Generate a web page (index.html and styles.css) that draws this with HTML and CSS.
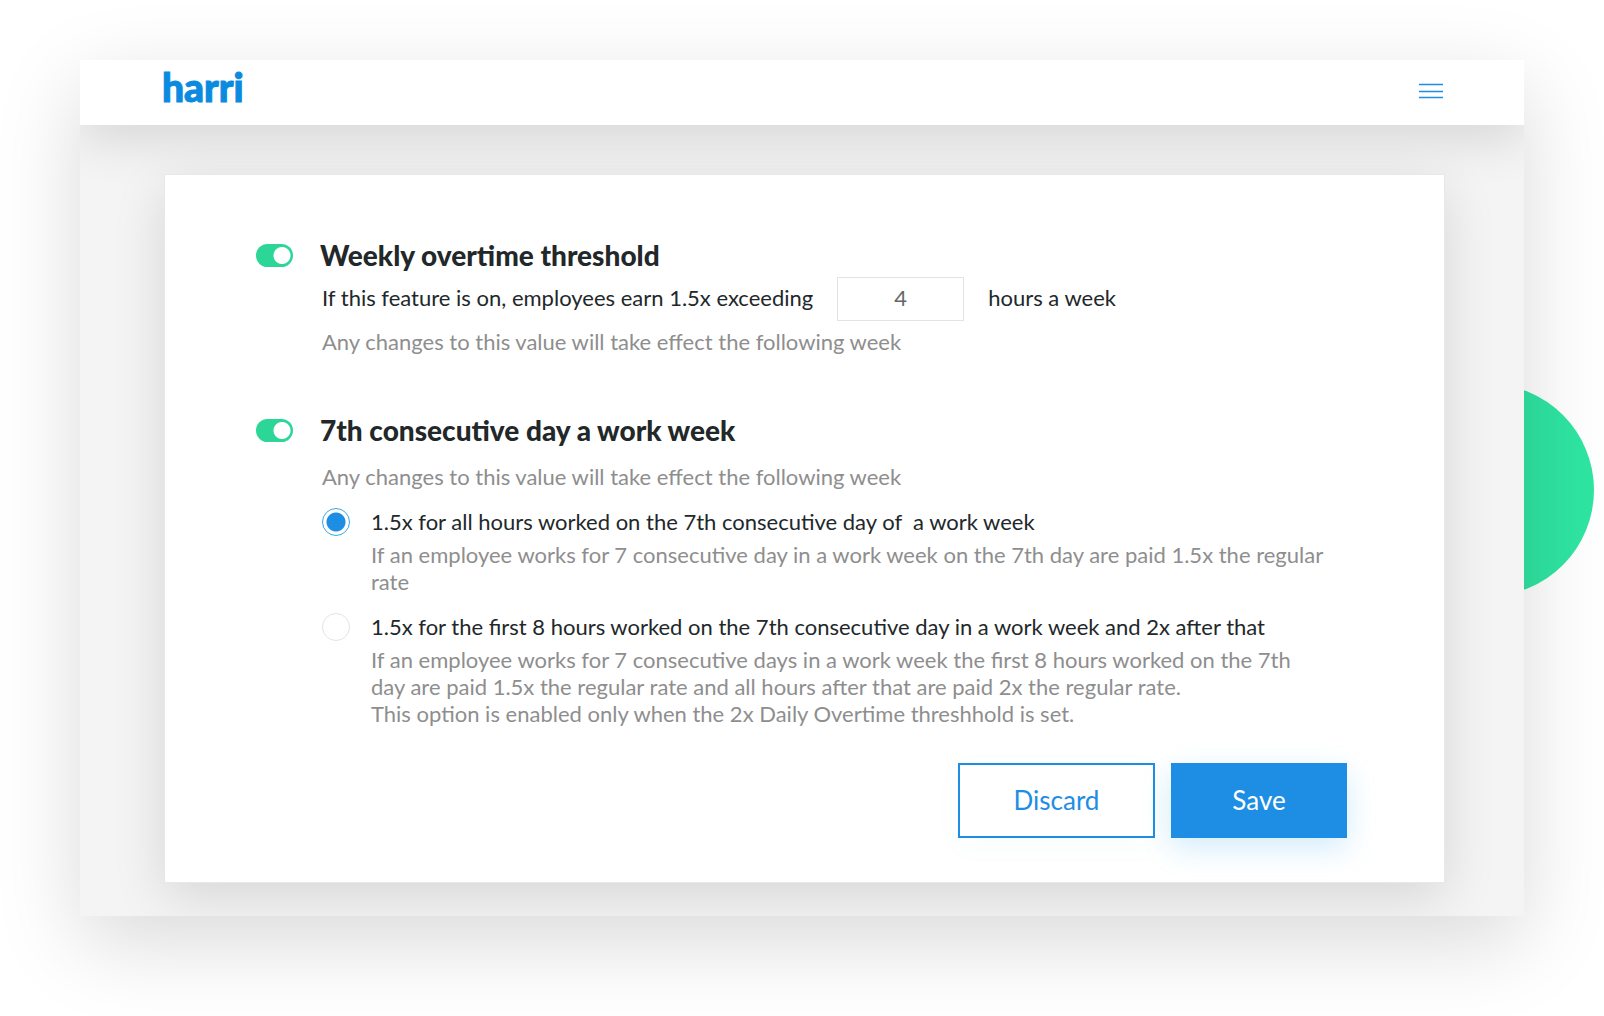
FILE: index.html
```
<!DOCTYPE html>
<html lang="en">

<head>
  <meta charset="utf-8">
  <title>Overtime settings</title>
  <link rel="stylesheet" href="styles.css">
</head>

<body>
  <div class="stage">
    <div class="circle"></div>

    <div class="window">
      <header class="topbar">
        <a class="logo" href="#">harri</a>
        <button class="menu" type="button" aria-label="Menu">
          <svg width="24" height="16" viewBox="0 0 24 16">
            <path d="M0 1.5h24M0 8.5h24M0 14.5h24" />
          </svg>
        </button>
      </header>

      <form class="card" action="#" method="post">
        <section class="setting">
          <input class="toggle" type="checkbox" id="weekly" checked>
          <div class="setting-body">
            <h2><label for="weekly">Weekly overtime threshold</label></h2>
            <div class="threshold">
              <label for="hours">If this feature is on, employees earn 1.5x exceeding</label>
              <input type="text" id="hours" name="hours" value="4">
              <span>hours a week</span>
            </div>
            <p class="note">Any changes to this value will take effect the following week</p>
          </div>
        </section>

        <section class="setting">
          <input class="toggle" type="checkbox" id="seventh" checked>
          <div class="setting-body">
            <h2><label for="seventh">7th consecutive day a work week</label></h2>
            <p class="note note-spaced">Any changes to this value will take effect the following week</p>

            <div class="option">
              <input type="radio" id="all-hours" name="rate" checked>
              <div>
                <label for="all-hours">1.5x for all hours worked on the 7th consecutive day of &nbsp;a work week</label>
                <p>If an employee works for 7 consecutive day in a work week on the 7th day are paid 1.5x the regular<br>
                  rate</p>
              </div>
            </div>

            <div class="option">
              <input type="radio" id="first-hours" name="rate">
              <div>
                <label for="first-hours">1.5x for the first 8 hours worked on the 7th consecutive day in a work week and 2x after that</label>
                <p>If an employee works for 7 consecutive days in a work week the first 8 hours worked on the 7th<br>
                  day are paid 1.5x the regular rate and all hours after that are paid 2x the regular rate.<br>
                  This option is enabled only when the 2x Daily Overtime threshhold is set.</p>
              </div>
            </div>
          </div>
        </section>

        <div class="actions">
          <button class="discard" type="button">Discard</button>
          <button class="save" type="submit">Save</button>
        </div>
      </form>
    </div>
  </div>
</body>

</html>
```
FILE: styles.css
```
* {
  box-sizing: border-box;
}

body {
  margin: 0;
  background: #fff;
  color: #22282a;
  font-family: Lato, "Liberation Sans", sans-serif;
  font-size: 22px;
  line-height: 27px;
}

h2,
p {
  margin: 0;
}

.stage {
  position: relative;
  padding: 60px 80px 100px;
}

/* green disc peeking out behind the window */
.circle {
  position: absolute;
  top: 384px;
  right: 10px;
  width: 212px;
  height: 212px;
  border-radius: 50%;
  background: #2fe5a2;
}

.window {
  position: relative;
  overflow: hidden;
  padding-bottom: 33px;
  background: #f4f4f4;
  box-shadow: 0 26px 80px rgba(0, 0, 0, .15);
}

.topbar {
  display: flex;
  justify-content: space-between;
  align-items: center;
  height: 65px;
  padding: 0 81px 4px 82px;
  background: #fff;
  box-shadow: 0 14px 50px rgba(0, 0, 0, .12);
}

.logo {
  padding-bottom: 8px;
  color: #0a8be0;
  font-size: 39px;
  font-weight: 900;
  line-height: 40px;
  text-decoration: none;
  -webkit-text-stroke: 1px #0a8be0;
}

.menu {
  display: flex;
  padding: 0;
  border: 0;
  background: none;
  cursor: pointer;
}

.menu path {
  stroke: #1e8de4;
  stroke-width: 1.4;
}

.card {
  margin: 49px 79px 0 84px;
  padding: 62px 97px 44px 91px;
  border: 1px solid #e8e8e8;
  background: #fff;
  box-shadow: 0 14px 50px rgba(0, 0, 0, .12);
}

.setting {
  display: flex;
  gap: 27px;
}

.setting+.setting {
  margin-top: 57px;
}

.setting-body {
  flex: 1;
}

.setting h2 {
  font-size: 28px;
  font-weight: 900;
  line-height: 36px;
}

.toggle {
  appearance: none;
  flex: none;
  width: 37px;
  height: 23px;
  margin: 7px 0 0;
  border-radius: 12px;
  background: radial-gradient(circle at 26px 50%, #fff 8px, #2bd696 9px);
}

.threshold {
  display: flex;
  align-items: center;
  gap: 24px;
  margin: 4px 0 7px 2px;
}

.threshold label,
.threshold span {
  padding-bottom: 3px;
}

.threshold input {
  width: 127px;
  height: 44px;
  padding-bottom: 4px;
  border: 1px solid #e3e3e3;
  color: #666;
  font: inherit;
  text-align: center;
}

.note {
  margin-left: 2px;
  color: #8e8e8e;
}

.note-spaced {
  margin-top: 15px;
}

.option {
  display: flex;
  gap: 21px;
  margin: 18px 0 0 2px;
}

.option input {
  appearance: none;
  flex: none;
  width: 28px;
  height: 28px;
  margin: 0;
  border: 1px solid #e3e3e3;
  border-radius: 50%;
}

.option input:checked {
  border-color: #36a6ea;
  background: radial-gradient(circle, #1e8de4 9px, #fff 10px);
}

.option label {
  display: block;
  margin-bottom: 6px;
}

.option p {
  color: #8e8e8e;
}

.actions {
  display: flex;
  justify-content: flex-end;
  gap: 16px;
  margin-top: 36px;
}

.actions button {
  height: 75px;
  border: 2px solid #1e8de4;
  font: inherit;
  font-size: 26px;
  cursor: pointer;
}

.discard {
  width: 197px;
  background: #fff;
  color: #1e8de4;
  box-shadow: 0 8px 30px rgba(30, 160, 228, .03);
}

.save {
  width: 176px;
  background: #1e8de4;
  color: #fff;
  box-shadow: 0 10px 30px rgba(30, 160, 228, .2);
}
```
